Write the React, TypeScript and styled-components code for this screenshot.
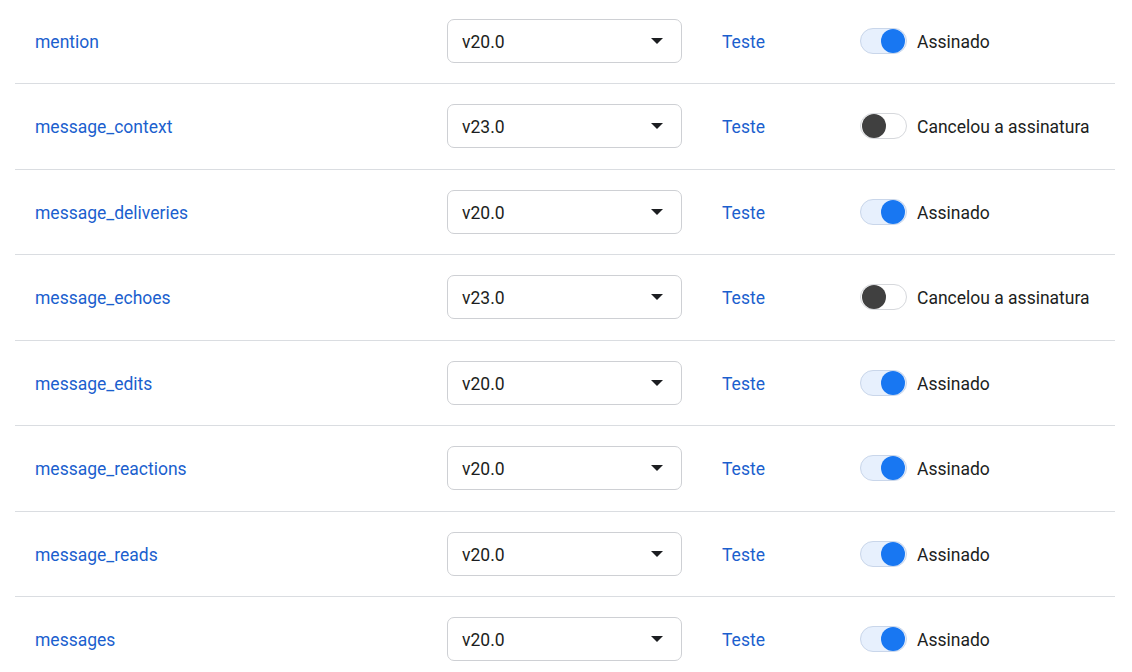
import styled, { createGlobalStyle } from 'styled-components';

const GlobalStyle = createGlobalStyle`
  body {
    margin: 0;
    background: #ffffff;
    font-family: Roboto, 'Liberation Sans', Arial, sans-serif;
    color: #1c1e21;
  }
`;

const List = styled.div`
  margin-top: -1.5px;
  padding: 0 17px 0 15px;
`;

const Row = styled.div`
  display: grid;
  grid-template-columns: 432px 235px 138px 1fr;
  align-items: center;
  height: 84.5px;
  border-bottom: 1px solid #dadde1;
`;

const FieldName = styled.a`
  padding: 2px 0 0 20px;
  font-size: 17.5px;
  color: #1b5fce;
  text-decoration: none;
`;

const Select = styled.div`
  display: flex;
  align-items: center;
  justify-content: space-between;
  height: 44px;
  box-sizing: border-box;
  padding: 2px 18px 0 14px;
  border: 1px solid #ced0d4;
  border-radius: 7px;
  font-size: 17.5px;
  color: #1c1e21;
`;

const Caret = styled.span`
  width: 0;
  height: 0;
  margin-top: -2px;
  border-left: 6.5px solid transparent;
  border-right: 6.5px solid transparent;
  border-top: 6.5px solid #1c1e21;
`;

const TestLink = styled.a`
  padding: 2px 0 0 40px;
  font-size: 17.5px;
  color: #1b5fce;
  text-decoration: none;
`;

const Status = styled.div`
  display: flex;
  align-items: center;
  gap: 10px;
  padding-left: 40px;
  font-size: 17.5px;
  color: #1c1e21;
`;

const Label = styled.span`
  padding-top: 2px;
`;

const Track = styled.span<{ $on: boolean }>`
  display: flex;
  align-items: center;
  justify-content: ${(p) => (p.$on ? 'flex-end' : 'flex-start')};
  width: 47px;
  height: 26px;
  box-sizing: border-box;
  padding: 0 1px;
  border-radius: 13px;
  border: 1px solid ${(p) => (p.$on ? '#c9d6ea' : '#d6d8dc')};
  background: ${(p) => (p.$on ? '#e7f0fd' : '#ffffff')};
`;

const Knob = styled.span<{ $on: boolean }>`
  width: 24px;
  height: 24px;
  border-radius: 50%;
  background: ${(p) => (p.$on ? '#1877f2' : '#404040')};
`;

const fields = [
  { name: 'mention', version: 'v20.0', on: true },
  { name: 'message_context', version: 'v23.0', on: false },
  { name: 'message_deliveries', version: 'v20.0', on: true },
  { name: 'message_echoes', version: 'v23.0', on: false },
  { name: 'message_edits', version: 'v20.0', on: true },
  { name: 'message_reactions', version: 'v20.0', on: true },
  { name: 'message_reads', version: 'v20.0', on: true },
  { name: 'messages', version: 'v20.0', on: true },
];

export default function App() {
  return (
    <>
      <GlobalStyle />
      <List>
        {fields.map((f) => (
          <Row key={f.name}>
            <FieldName href="#">{f.name}</FieldName>
            <Select>
              {f.version}
              <Caret />
            </Select>
            <TestLink href="#">Teste</TestLink>
            <Status>
              <Track $on={f.on}>
                <Knob $on={f.on} />
              </Track>
              <Label>{f.on ? 'Assinado' : 'Cancelou a assinatura'}</Label>
            </Status>
          </Row>
        ))}
      </List>
    </>
  );
}
